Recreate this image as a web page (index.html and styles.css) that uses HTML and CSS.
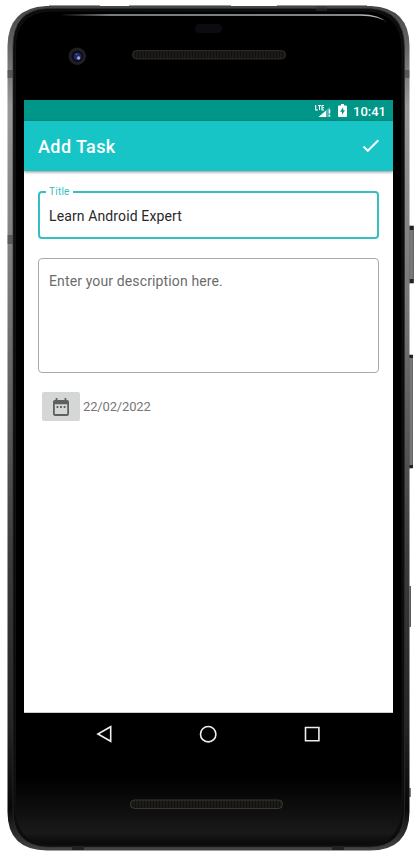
FILE: index.html
```html
<!DOCTYPE html>
<html lang="en">
<head>
<meta charset="utf-8">
<title>Add Task</title>
<link rel="stylesheet" href="styles.css">
</head>
<body>
<main class="phone">
  <svg class="shell" viewBox="0 0 417 857" aria-hidden="true">
    <defs>
      <linearGradient id="metal" x2="0" y2="1">
        <stop offset="0" stop-color="#444"/><stop offset=".12" stop-color="#999"/><stop offset=".35" stop-color="#777"/><stop offset=".65" stop-color="#3c3c3c"/><stop offset=".85" stop-color="#252525"/><stop offset=".95" stop-color="#080808"/><stop offset="1" stop-color="#444"/>
      </linearGradient>
      <linearGradient id="chin" x2="0" y2="1">
        <stop offset="0" stop-color="#000"/><stop offset=".92" stop-color="#000"/><stop offset=".985" stop-color="#191919"/><stop offset="1" stop-color="#080808"/>
      </linearGradient>
      <linearGradient id="shine"><stop offset="0" stop-color="#9aa4a9" stop-opacity="0"/><stop offset=".15" stop-color="#9aa4a9"/><stop offset="1" stop-color="#aeb6ba"/></linearGradient>
      <pattern id="mesh" width="3" height="3" patternUnits="userSpaceOnUse"><rect width="3" height="3" fill="#1d1b18"/><path d="M.5 0v3" stroke="#13110f"/></pattern>
    </defs>
    <g fill="#777" stroke="#444" stroke-width=".7">
      <rect x="409" y="226" width="4.500" height="57"/>
      <rect x="409" y="355" width="3.500" height="113"/>
    </g>
    <path d="M411.500 226v4M411.500 279v4M411 355v3M411 465v3" stroke="#222" stroke-width="4"/>
    <path d="M410.200 586v41M410 788v9" stroke="#555" stroke-width="1.500"/>
    <path d="M49 5.500H100M129 5.500H231M277 5.500H367" stroke="#999"/>
    <path d="M46 6H371Q409.500 8 409.500 46V812Q409 850.500 370 850.500H47Q7.500 850 7.500 812V46Q8 8 46 6Z" fill="url(#metal)"/>
    <path d="M47 8.500H369Q404 10 404.500 47V810Q404 847 369 847H48Q13 846 13 810V47Q13 10 47 8.500Z" fill="#0c0c0c" stroke="#2c2c2c" stroke-width=".7"/>
    <path d="M48 11H368Q401 13 402 48V809Q400 844 368 845H49Q16 843 15.500 809V48Q15 14 48 11Z" fill="url(#chin)" stroke="#111"/>
    <path d="M7.500 70h6v8h-6zM7.500 235h6v9h-6zM404 70h5.500v8H404zM316 6h11v5h-11z" fill="#333" fill-opacity=".5"/>
    <path d="M60 14.200H360Q379 14 388 23Q380 16 360 15.800H60Z" fill="url(#shine)"/>
    <path d="M50 848.500H367" stroke="#444" stroke-width="1.500"/>
    <path d="M72 846h12v4H72zM332 846h12v4h-12z" fill="#222"/>
    <rect x="195" y="24" width="27" height="9" rx="4.500" fill="#0b0c11"/>
    <rect x="132.500" y="50.500" width="153" height="8.500" rx="4" fill="url(#mesh)" stroke="#35322f" stroke-width=".8"/>
    <rect x="130.500" y="800" width="152" height="8.500" rx="4" fill="url(#mesh)" stroke="#43423f" stroke-width=".8"/>
    <circle cx="77.300" cy="56.200" r="8.700" fill="#211f20"/>
    <circle cx="77.300" cy="56.200" r="5.700" fill="#0b0c22"/>
    <circle cx="77.500" cy="56.500" r="3.800" fill="#20295c"/>
    <circle cx="78.600" cy="58" r="1.700" fill="#91a7ea"/>
    <circle cx="76.500" cy="54.300" r=".8" fill="#6273b5"/>
  </svg>
  <section class="screen">
    <div class="status">
      <svg class="signal" viewBox="0 0 17 14"><path d="M15 2.500V13H4.500Z" fill="#fff" fill-opacity=".3"/><path d="M11 6.500V13H3.500Z" fill="#fff"/><path d="M.7 1v5H3M3 1.500h3M4.500 1.500V6M9 1.500H7V6h2M7 3.700h2" fill="none" stroke="#fff" stroke-width="1.100"/><path d="M14.500 5.500v4M14.500 11v1.500" stroke="#fff" stroke-width="1.500"/></svg>
      <svg class="battery" viewBox="0 0 9 13"><path d="M3 0h3v1.500h2q1 0 1 1V12q0 1-1 1H1q-1 0-1-1V2.500q0-1 1-1h2Z" fill="#fff"/><path d="M5.200 3.200 2 7.800h2v3L7 6.300H5.200Z" fill="#009688"/></svg>
      <span class="clock">10:41</span>
    </div>
    <header class="toolbar">
      <h1>Add Task</h1>
      <svg class="check" viewBox="0 0 18 14"><path d="m1.500 7.500 4.300 4.300L16.300 1.300" fill="none" stroke="#fff" stroke-width="2"/></svg>
    </header>
    <div class="form">
      <fieldset class="field"><legend>Title</legend><span>Learn Android Expert</span></fieldset>
      <div class="description">Enter your description here.</div>
      <div class="date">
        <span class="datebutton"><svg viewBox="0 0 18 20"><path fill="#5d605f" fill-rule="evenodd" d="M16 2h-1V0h-2v2H5V0H3v2H2Q0 2 0 4v14q0 2 2 2h14q2 0 2-2V4q0-2-2-2M2 7h14v11H2ZM4 9h2v2H4Zm4 0h2v2H8Zm4 0h2v2h-2Z"/></svg></span>
        <span>22/02/2022</span>
      </div>
    </div>
  </section>
  <nav class="navbar">
    <svg viewBox="0 0 18 18"><path d="M15.700 1.700V16.300L2.900 9Z"/></svg>
    <svg viewBox="0 0 18 18"><circle cx="9.200" cy="9.200" r="7.700"/></svg>
    <svg viewBox="0 0 18 18"><path d="M2.500 2.500H15.900V15.700H2.500Z"/></svg>
  </nav>
</main>
</body>
</html>
```
FILE: styles.css
```css
* { box-sizing: border-box; }
body { margin: 0; background: #fff; font-family: Roboto, sans-serif; overflow: hidden; }
.phone { position: relative; width: 417px; height: 857px; padding: 100px 24px 0; }
.shell { position: absolute; inset: 0; width: 417px; height: 857px; }
.screen { position: relative; width: 369px; height: 613px; background: #fff; border-bottom: 1px solid #ccc; }
.status { height: 21px; background: #009688; color: #fff; display: flex; align-items: center; padding: 0 7px 0 291px; }
.signal { width: 17px; height: 14px; }
.battery { width: 9px; height: 13px; margin-left: 6px; }
.clock { margin-left: auto; font-size: 13px; font-weight: 500; line-height: 21px; padding-top: 1px; }
.toolbar { height: 50px; background: #17c5c7; color: #fff; display: flex; align-items: center; justify-content: space-between; padding: 0 13px 0 14px; box-shadow: 0 1px 3px #0007; }
h1 { margin: 0; padding-top: 2px; font-size: 18px; line-height: 22px; font-weight: 500; letter-spacing: .4px; }
.check { width: 18px; height: 14px; }
.form { padding: 14px 14px 0 14px; }
.field { height: 54px; margin: 0; border: 2px solid #35bfc1; border-radius: 4px; padding: 0 9px; min-width: 0; color: #292929; font-size: 14px; }
.field legend { margin-left: -3px; padding: 0 3px; height: 13px; line-height: 14px; font-size: 10px; letter-spacing: .25px; color: #35bfc1; }
.field span { display: block; line-height: 18px; padding-top: 9px; letter-spacing: .12px; white-space: nowrap; }
.description { margin-top: 19px; height: 115px; border: 1px solid #aaa; border-radius: 4px; padding: 13px 10px; color: #6c6c6c; font-size: 14px; line-height: 18px; letter-spacing: .13px; }
.date { margin: 19px 0 0 3.5px; height: 29px; display: flex; align-items: center; color: #777; font-size: 13px; letter-spacing: -.15px; }
.datebutton { width: 38px; height: 29px; margin-right: 3.5px; border-radius: 2px; background: #d5d7d7; display: flex; align-items: center; justify-content: center; }
.datebutton svg { width: 16px; height: 18px; }
.navbar { position: relative; height: 42px; display: flex; justify-content: center; align-items: center; gap: 86px; padding-right: 1px; }
.navbar svg { width: 18px; height: 18px; fill: none; stroke: #eee; stroke-width: 1.6; }
```
